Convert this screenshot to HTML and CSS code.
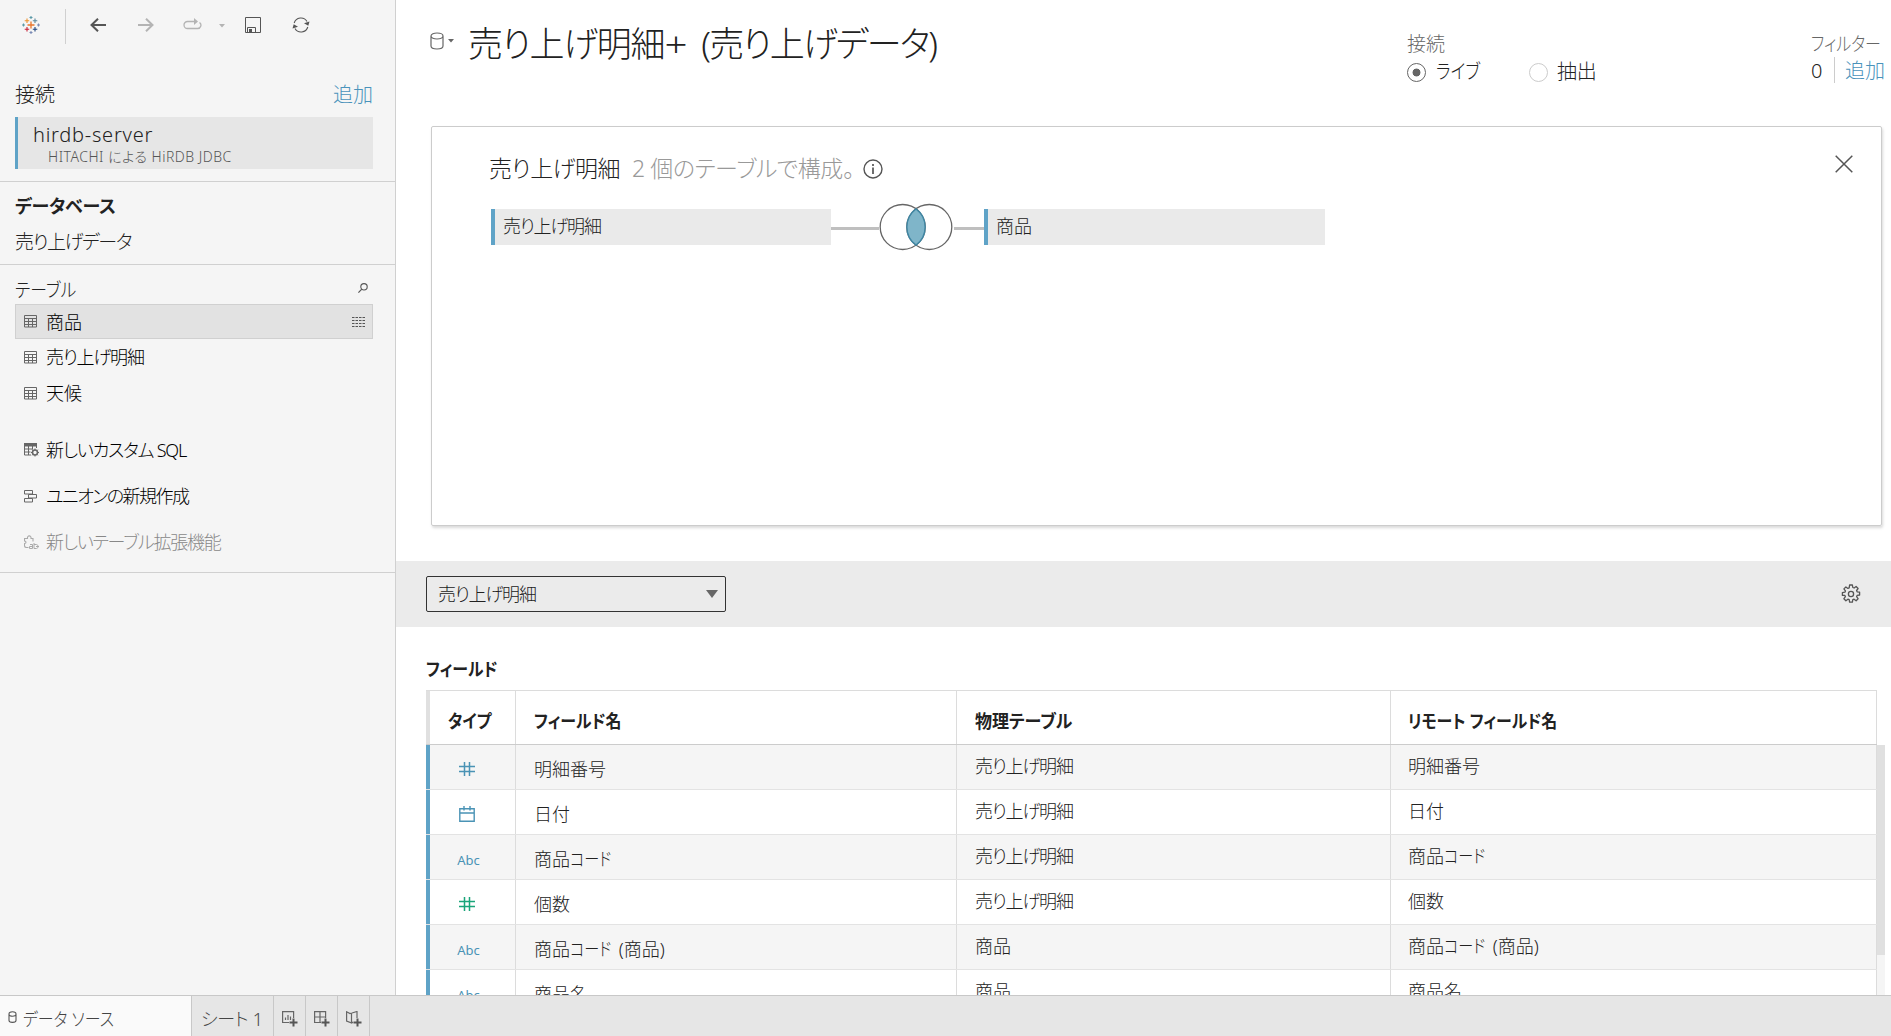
FILE: index.html
```
<!DOCTYPE html>
<html lang="ja">
<head>
    <meta charset="UTF-8">
    <meta name="viewport" content="width=device-width, initial-scale=1.0">
    <title>データ ソース</title>
    <link rel="stylesheet" href="styles.css">
</head>
<body>
    <!-- shared icons -->
    <svg class="defs" width="0" height="0">
        <symbol id="i-table" viewBox="0 0 13 13">
            <path d="M.5 .5h12v11.500h-12zM.5 3.500h12M.5 6.500h12M.5 9.500h12M4.500 3.500v8.500M8.500 3.500v8.500" fill="none" stroke="#666"/>
        </symbol>
        <symbol id="i-hash" viewBox="0 0 16 16">
            <path d="M5.500 1v14M10.500 1v14M0 5.500h16M0 10.500h16" fill="none" stroke="currentColor" stroke-width="1.500"/>
        </symbol>
        <symbol id="i-cyl" viewBox="0 0 14 18">
            <path d="M1 4v10c0 4 12 4 12 0V4M1 4c0-4 12-4 12 0s-12 4-12 0z" fill="none" stroke="#666" stroke-width="1.200"/>
        </symbol>
    </svg>
    <div class="app">
        <div class="top">
            <div class="side">
                <div class="toolbar">
                    <svg class="logo" width="18" height="18" viewBox="0 0 18 18" fill="none" stroke-width="1.100">
                        <path d="M9 5.500v7M5.500 9h7" stroke="#e8762c" stroke-width="1.300"/>
                        <path d="M5 2.500v4.500M2.700 4.700h4.500" stroke="#eb912c"/>
                        <path d="M13 2.500v4.500M10.800 4.700h4.500" stroke="#59879b"/>
                        <path d="M5 11v4.500M2.700 13.300h4.500" stroke="#c72035"/>
                        <path d="M13 11v4.500M10.800 13.300h4.500" stroke="#1f447e"/>
                        <path d="M9 0v3M7.500 1.500h3M1.500 7.500v3M0 9h3" stroke="#5b9aa8"/>
                        <path d="M9 15v3M7.500 16.500h3M16.500 7.500v3M15 9h3" stroke="#7b8bb5"/>
                    </svg>
                    <span class="vline"></span>
                    <svg class="back" width="16" height="14" viewBox="0 0 16 14"><path d="M8 .7L1.500 7 8 13.300M1.500 7H16" fill="none" stroke="#555" stroke-width="2"/></svg>
                    <svg class="fwd" width="16" height="14" viewBox="0 0 16 14"><path d="M8 .7L14.500 7 8 13.300M14.500 7H0" fill="none" stroke="#b4b4b4" stroke-width="2"/></svg>
                    <svg class="redo" width="19" height="12" viewBox="0 0 19 12"><path d="M12 3.500H4.500a3.500 3.500 0 0 0 0 7h10a3.300 3.300 0 0 0 2-6" fill="none" stroke="#b4b4b4" stroke-width="1.300"/><path d="M11 0l4 3.500-4 3.500z" fill="#b4b4b4"/></svg>
                    <svg class="caret" width="6" height="4" viewBox="0 0 6 4"><path d="M0 0h6L3 3.500z" fill="#b4b4b4"/></svg>
                    <svg class="save" width="16" height="16" viewBox="0 0 16 16"><path d="M.5.5h15v15H.5zM2.500 15.500v-5h8v5" fill="none" stroke="#555"/><path d="M4 12h3v3.500H4z" fill="#555"/></svg>
                    <svg class="refresh" width="18" height="16" viewBox="0 0 18 16"><path d="M2.200 6A7 7 0 0 1 15 4.500M15.800 10A7 7 0 0 1 3 11.500" fill="none" stroke="#555" stroke-width="1.100"/><path d="M17.500 4.500l-1.200 4.300-4.300-2.500zM.5 11.500l1.200-4.300L6 9.700z" fill="#555"/></svg>
                </div>
                <div class="conn">
                    <div class="row head"><span class="ttl">接続</span><a class="add">追加</a></div>
                    <div class="server">
                        <p class="name">hirdb-server</p>
                        <p class="kind">HITACHI による HiRDB JDBC</p>
                    </div>
                </div>
                <div class="db">
                    <h4>データベース</h4>
                    <p>売り上げデータ</p>
                </div>
                <div class="tables">
                    <div class="row tblhead">
                        <span class="k">テーブル</span>
                        <svg width="10" height="10" viewBox="0 0 10 10"><circle cx="6" cy="3.800" r="3.200" fill="none" stroke="#555" stroke-width="1.100"/><path d="M3.800 6.200L.4 9.600" stroke="#555" stroke-width="1.200"/></svg>
                    </div>
                    <div class="item active">
                        <svg width="13" height="13"><use href="#i-table"/></svg><span>商品</span>
                        <svg class="view" width="13" height="10" viewBox="0 0 13 10"><path d="M0 .5h13M0 3.500h13M0 6.500h13M0 9.500h13" stroke="#555" stroke-dasharray="2.500 1"/></svg>
                    </div>
                    <div class="item"><svg width="13" height="13"><use href="#i-table"/></svg><span class="t">売り上げ明細</span></div>
                    <div class="item"><svg width="13" height="13"><use href="#i-table"/></svg><span>天候</span></div>
                    <div class="item sql">
                        <svg width="15" height="14" viewBox="0 0 15 14"><path d="M0 0h13v3.500H0z" fill="#666"/><path d="M.5 3v9H7M.5 6h8M.5 9h6M4.500 3v9M8.500 3v3.500M12.500 3v2" fill="none" stroke="#666"/><circle cx="11" cy="9.500" r="2.500" fill="none" stroke="#666" stroke-width="1.600"/><path d="M11 5.500v1.500M11 12v1.500M7 9.500h1.500M13.500 9.500H15M8.200 6.700l1 1M12.800 11.300l1 1M8.200 12.300l1-1M12.800 7.700l1-1" stroke="#666"/></svg>
                        <span class="t">新しいカスタム SQL</span>
                    </div>
                    <div class="item uni">
                        <svg width="13" height="13" viewBox="0 0 13 13"><path d="M.5.5h8v3.500h-8zM4.500 4.500h8V8h-8zM.5 8.500h8V12h-8z" fill="none" stroke="#666"/></svg>
                        <span>ユニオンの新規作成</span>
                    </div>
                    <div class="item ext">
                        <svg width="15" height="14" viewBox="0 0 15 14"><path d="M4.500 12.500H2.500a2 2 0 0 1-2-2V8.500c2 0 2-2.500 0-2.500V3.500H3.500c-.5-3.500 4-3.500 3.500 0h2v3" fill="none" stroke="#aaa" stroke-width="1.100"/><path d="M6 9.500h2.500v4H5.500v-2h3M10 8v5.500h2.500c2 0 2-4 0-4H10M12 11.500h3" fill="none" stroke="#aaa"/></svg>
                        <span class="t">新しいテーブル拡張機能</span>
                    </div>
                </div>
            </div>

            <div class="main">
                <div class="header">
                    <div class="dsname">
                        <svg class="cyl" width="14" height="18"><use href="#i-cyl"/></svg>
                        <svg class="car" width="6" height="4" viewBox="0 0 6 4"><path d="M0 0h6L3 3.500z" fill="#666"/></svg>
                        <h1><span class="h1a">売り上げ明細</span><span class="plus">+</span> <span class="h1b">(売り上げデータ)</span></h1>
                    </div>
                    <div class="mode">
                        <p>接続</p>
                        <div class="radios">
                            <span class="radio on"></span><span class="live k">ライブ</span>
                            <span class="radio"></span><span class="extract">抽出</span>
                        </div>
                    </div>
                    <div class="filter">
                        <p class="k">フィルター</p>
                        <div class="cnt"><span class="zero">0</span><a class="add">追加</a></div>
                    </div>
                </div>

                <div class="card">
                    <div class="cardhead">
                        <h2>売り上げ明細</h2>
                        <span class="desc"><i>2</i> 個のテーブルで構成。</span>
                        <svg class="info" width="20" height="20" viewBox="0 0 20 20"><circle cx="10" cy="10" r="9" fill="none" stroke="#555" stroke-width="1.400"/><path d="M10 8.500V15M10 5v2" stroke="#555" stroke-width="1.700"/></svg>
                        <svg class="close" width="18" height="18" viewBox="0 0 18 18"><path d="M.7.7l16.600 16.600M17.300.7L.7 17.300" stroke="#555" stroke-width="1.500"/></svg>
                    </div>
                    <div class="join">
                        <div class="tbl t">売り上げ明細</div>
                        <span class="link l1"></span>
                        <svg class="venn" width="75" height="48" viewBox="0 0 75 48">
                            <circle cx="23.700" cy="24" r="22.500" fill="none" stroke="#666" stroke-width="1.300"/>
                            <circle cx="50.300" cy="24" r="22.500" fill="none" stroke="#666" stroke-width="1.300"/>
                            <path d="M37 5.900A22.500 22.500 0 0 1 37 42.100A22.500 22.500 0 0 1 37 5.900z" fill="#7fb5c9" stroke="#3f86a3" stroke-width="1.400"/>
                        </svg>
                        <span class="link l2"></span>
                        <div class="tbl last">商品</div>
                    </div>
                </div>

                <div class="strip">
                    <div class="select"><span class="t">売り上げ明細</span><svg width="12" height="8" viewBox="0 0 12 8"><path d="M0 0h12L6 8z" fill="#666"/></svg></div>
                    <svg class="gear" width="20" height="20" viewBox="0 0 20 20" fill="none" stroke="#555" stroke-width="1.300">
                        <path d="M8.600 1h2.800l.4 2.500 1.300.5 2-1.500 2 2-1.500 2 .5 1.300 2.500.4v2.800l-2.500.4-.5 1.300 1.500 2-2 2-2-1.500-1.300.5-.4 2.500H8.600l-.4-2.500-1.300-.5-2 1.500-2-2 1.500-2-.5-1.300L1.400 11.400V8.600l2.500-.4.5-1.300-1.500-2 2-2 2 1.500 1.300-.5z" stroke-linejoin="round"/>
                        <circle cx="10" cy="10" r="2.600"/>
                    </svg>
                </div>

                <div class="fields">
                    <h3><span class="k">フィールド</span></h3>
                    <div class="grid">
                        <div class="tr th"><div class="c1"><span class="k">タイプ</span></div><div class="c2"><span class="k">フィールド名</span></div><div class="c3"><span class="k wide">物理テーブル</span></div><div class="c4"><span class="k">リモート フィールド名</span></div></div>
                        <div class="tr odd"><div class="c1"><svg width="16" height="16"><use href="#i-hash"/></svg></div><div class="c2">明細番号</div><div class="c3 t">売り上げ明細</div><div class="c4">明細番号</div></div>
                        <div class="tr"><div class="c1"><svg width="16" height="16" viewBox="0 0 16 16"><path d="M.8 2.800h14.400v12.400H.8zM.8 7h14.400M5 0v4.500M11 0v4.500" fill="none" stroke="currentColor" stroke-width="1.400"/></svg></div><div class="c2">日付</div><div class="c3 t">売り上げ明細</div><div class="c4">日付</div></div>
                        <div class="tr odd"><div class="c1 abc">Abc</div><div class="c2">商品<span class="k code">コード</span></div><div class="c3 t">売り上げ明細</div><div class="c4">商品<span class="k code">コード</span></div></div>
                        <div class="tr"><div class="c1 green"><svg width="16" height="16"><use href="#i-hash"/></svg></div><div class="c2">個数</div><div class="c3 t">売り上げ明細</div><div class="c4">個数</div></div>
                        <div class="tr odd"><div class="c1 abc">Abc</div><div class="c2">商品<span class="k code">コード</span> (商品)</div><div class="c3">商品</div><div class="c4">商品<span class="k code">コード</span> (商品)</div></div>
                        <div class="tr"><div class="c1 abc">Abc</div><div class="c2">商品名</div><div class="c3">商品</div><div class="c4">商品名</div></div>
                        <div class="scroll"><span></span></div>
                    </div>
                </div>
            </div>
        </div>

        <div class="tabs">
            <div class="tab ds"><svg width="9" height="12" viewBox="0 0 9 12"><path d="M1 3v6.500c0 2.500 7 2.500 7 0V3M1 3c0-3 7-3 7 0S1 6 1 3z" fill="none" stroke="#555" stroke-width="1.100"/></svg><span class="k">データ ソース</span></div>
            <div class="tab sheet"><span>シート 1</span></div>
            <div class="tab ico"><svg width="16" height="16" viewBox="0 0 16 16"><path d="M7 11.500H.6V.6h11V7M3.500 9V6.500M6 9V4M8.500 9V5.500" fill="none" stroke="#666" stroke-width="1.200"/><path d="M11.500 7.500v8M7.500 11.500h8" stroke="#555" stroke-width="2"/></svg></div>
            <div class="tab ico"><svg width="16" height="16" viewBox="0 0 16 16"><path d="M7 11.500H.6V.6h11V7M6 .6v11M.6 6h11" fill="none" stroke="#666" stroke-width="1.200"/><path d="M11.500 7.500v8M7.500 11.500h8" stroke="#555" stroke-width="2"/></svg></div>
            <div class="tab ico"><svg width="16" height="16" viewBox="0 0 16 16"><path d="M7 11L5.800 12 .6 10V.8L4 2.500 6 2l5-1.500V7M5.500 2.500v9.500" fill="none" stroke="#666" stroke-width="1.200"/><path d="M11.500 7.500v8M7.500 11.500h8" stroke="#555" stroke-width="2"/></svg></div>
        </div>
    </div>
</body>
</html>
```
FILE: styles.css
```
*{
    margin: 0;
    padding: 0;
    box-sizing: border-box;
}
body{
    font-family: "Noto Sans", "Noto Sans CJK JP", sans-serif;
    font-size: 18px;
    font-weight: 300;
    line-height: 24px;
    color: #222;
    background: #fff;
    font-feature-settings: "palt";
    white-space: nowrap;
    overflow: hidden;
}
svg{
    display: block;
    flex: none;
}
.defs{
    position: absolute;
}
/* narrow kana */
.k{
    display: inline-block;
    transform: scaleX(.885);
    transform-origin: left;
}
.wide{
    transform: scaleX(.945);
}
.code{
    transform: scaleX(.84);
    margin-right: -5px;
}
.t{
    letter-spacing: -1.2px;
}
.app{
    height: 1036px;
    display: flex;
    flex-direction: column;
}
.top{
    height: 995px;
    display: flex;
}
.row{
    display: flex;
    justify-content: space-between;
    align-items: center;
}
.add{
    color: #4a93bb;
    font-size: 20px;
}

/* left pane */
.side{
    width: 396px;
    flex: none;
    background: #f5f5f5;
    border-right: 1px solid #d0d0d0;
}
.toolbar{
    height: 50px;
    display: flex;
    align-items: center;
    padding-left: 22px;
}
.vline{
    width: 1px;
    height: 35px;
    margin: 3px 24px 0 25px;
    background: #d0d0d0;
}
.fwd{
    margin-left: 32px;
}
.redo{
    margin: -3px 0 0 29px;
}
.caret{
    margin: 1px 0 0 17px;
}
.save{
    margin-left: 20px;
}
.refresh{
    margin-left: 31px;
}
.conn{
    height: 132px;
    padding: 29px 22px 0 15px;
    border-bottom: 1px solid #d0d0d0;
}
.head{
    height: 32px;
    font-size: 20px;
}
.server{
    height: 52px;
    margin-top: 6px;
    background: #e6e6e6;
    border-left: 3px solid #5fa3c7;
    padding: 6px 0 0 15px;
}
.name{
    font-size: 20px;
    line-height: 24px;
    letter-spacing: .75px;
}
.kind{
    padding-left: 15px;
    font-size: 14px;
    line-height: 20px;
    letter-spacing: .5px;
    color: #555;
}
.db{
    height: 83px;
    padding: 12px 15px 0;
    border-bottom: 1px solid #d0d0d0;
}
.db h4{
    font-size: 18px;
    letter-spacing: -.2px;
}
.db p{
    margin-top: 12px;
    font-size: 19px;
    letter-spacing: -1.4px;
}
.tables{
    height: 308px;
    padding: 0 22px 0 15px;
    border-bottom: 1px solid #d0d0d0;
}
.tblhead{
    height: 39px;
    padding: 10px 5px 0 0;
    font-size: 19px;
}
.tblhead svg{
    margin-top: -4px;
}
.item{
    height: 36px;
    display: flex;
    align-items: center;
    padding-left: 9px;
    color: #000;
}
.item span{
    margin-left: 9px;
}
.active{
    height: 35px;
    padding-left: 8px;
    background: #e2e2e2;
    border: 1px solid #d0d0d0;
}
.view{
    margin: 0 7px 0 auto;
}
.sql{
    margin-top: 21px;
}
.sql span, .ext span{
    margin-left: 7px;
}
.uni, .ext{
    margin-top: 10px;
}
.uni span{
    letter-spacing: -1.5px;
}
.ext{
    color: #888;
}

/* right pane */
.main{
    flex: 1;
    overflow: hidden;
}
.header{
    height: 126px;
    display: flex;
    padding-left: 34px;
}
.dsname{
    width: 979px;
    height: 88px;
    display: flex;
    align-items: center;
}
.dsname .cyl{
    margin-top: -7px;
}
.car{
    margin: -7px 14px 0 4px;
}
.dsname h1{
    font-size: 35px;
    font-weight: 300;
    line-height: 50px;
}
.h1a{
    letter-spacing: -1.3px;
}
.plus{
    display: inline-block;
    margin: 0 6px 0 2px;
    transform: scaleX(1.15);
}
.h1b{
    letter-spacing: -1.8px;
}
.mode{
    width: 405px;
    padding-top: 32px;
    font-size: 20px;
}
.mode p, .filter p{
    font-size: 19px;
    color: #666;
}
.radios{
    display: flex;
    align-items: center;
    margin-top: 4px;
}
.radio{
    width: 19px;
    height: 19px;
    flex: none;
    border: 1px solid #ccc;
    border-radius: 50%;
}
.on{
    border-color: #666;
    background: radial-gradient(#666 0 3.600px, transparent 4.300px);
}
.live{
    width: 93px;
    margin-left: 10px;
    transform: scaleX(.84);
}
.extract{
    margin-left: 9px;
}
.filter{
    width: 80px;
    padding-top: 32px;
}
.filter p{
    transform: scaleX(.84);
}
.cnt{
    display: flex;
    margin-top: 1px;
}
.cnt .add{
    padding-top: 2px;
}
.zero{
    width: 24px;
    height: 26px;
    line-height: 28px;
    font-size: 20px;
    border-right: 1px solid #ccc;
    margin-right: 10px;
}
.card{
    width: 1451px;
    height: 400px;
    margin-left: 35px;
    border: 1px solid #ccc;
    border-radius: 2px;
    box-shadow: 1px 2px 3px rgba(0,0,0,.15);
}
.cardhead{
    height: 82px;
    display: flex;
    align-items: center;
    padding: 0 28px 0 57px;
}
.cardhead h2{
    width: 143px;
    font-size: 23px;
    font-weight: 300;
    letter-spacing: -.5px;
}
.desc{
    width: 231px;
    font-size: 23px;
    letter-spacing: -.4px;
    color: #999;
}
.desc i{
    font-style: normal;
}
.info{
    margin-top: 1px;
}
.close{
    margin: -8px 0 0 auto;
}
.join{
    display: flex;
    align-items: center;
    height: 36px;
    padding-left: 59px;
}
.tbl{
    width: 340px;
    height: 36px;
    padding: 5px 0 0 8px;
    background: #eaeaea;
    border-left: 4px solid #5fa3c7;
}
.last{
    width: 341px;
}
.link{
    height: 3px;
    margin-top: 2px;
    background: #bfbfbf;
}
.l1{
    width: 48px;
}
.l2{
    width: 30px;
}
.strip{
    height: 66px;
    margin-top: 35px;
    padding: 0 30px;
    display: flex;
    align-items: center;
    justify-content: space-between;
    background: #ebebeb;
}
.select{
    width: 300px;
    height: 36px;
    padding: 0 7px 0 11px;
    display: flex;
    align-items: center;
    justify-content: space-between;
    border: 1px solid #333;
    border-radius: 2px;
}
.fields{
    padding: 30px 0 0 30px;
}
.fields h3{
    height: 33px;
    font-size: 18px;
}
.grid{
    position: relative;
    width: 1451px;
}
.tr{
    display: flex;
    height: 45px;
    border-bottom: 1px solid #e3e3e3;
}
.tr div{
    border-right: 1px solid #dcdcdc;
    padding: 9px 0 0 18px;
}
.tr .c1{
    width: 90px;
    display: flex;
    align-items: center;
    justify-content: center;
    padding: 4px 12px 0 0;
    border-left: 4px solid #5fa3c7;
    color: #4a93b5;
}
.tr .c2{
    width: 441px;
    padding-top: 12px;
}
.tr .c3{
    width: 434px;
}
.tr .c4{
    width: 486px;
    padding-left: 17px;
}
.tr .green{
    color: #1aa57a;
}
.tr .abc{
    font-family: "Noto Sans", sans-serif;
    font-size: 13px;
    font-weight: 400;
    padding: 6px 8px 0 0;
}
.odd{
    background: #f5f5f5;
}
.tr.th{
    height: 55px;
    font-weight: bold;
    border-top: 1px solid #dcdcdc;
    border-bottom-color: #ccc;
}
.th div, .th .c2{
    padding-top: 18px;
}
.tr.th .c1{
    border-left-color: #e0e0e0;
    color: #222;
    justify-content: flex-start;
    padding: 7px 0 0 18px;
}
.scroll{
    position: absolute;
    top: 55px;
    right: -8px;
    width: 8px;
    height: 260px;
    background: #f5f5f5;
}
.scroll span{
    display: block;
    height: 210px;
    background: #e0e0e0;
}

/* sheet tabs */
.tabs{
    height: 41px;
    display: flex;
    background: #e6e6e6;
    border-top: 1px solid #c8c8c8;
}
.tab{
    display: flex;
    align-items: center;
    padding-top: 6px;
    border-right: 1px solid #c8c8c8;
    color: #444;
}
.ds{
    width: 192px;
    padding-left: 8px;
    background: #fafafa;
}
.ds svg{
    margin-top: -5px;
}
.ds span{
    margin-left: 6px;
}
.sheet{
    width: 82px;
    padding-left: 9px;
    letter-spacing: -.3px;
}
.ico{
    width: 32px;
    padding-left: 1px;
    justify-content: center;
}
```
